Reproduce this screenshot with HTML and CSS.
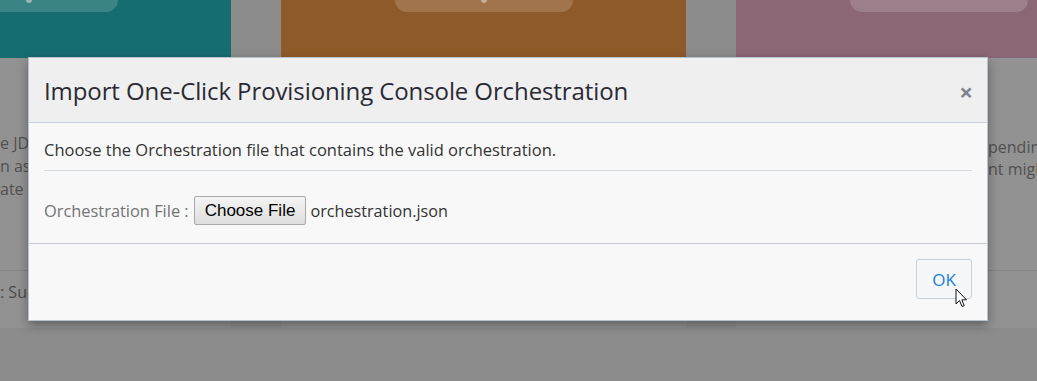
FILE: index.html
```html
<!DOCTYPE html>
<html lang="en">
<head>
<meta charset="utf-8">
<title>Import Orchestration</title>
<link rel="stylesheet" href="styles.css">
</head>
<body>
<div class="page">
  <div class="cards">
    <div class="card">
      <div class="card-head teal"><div class="pill"><span class="pill-icon"></span></div></div>
      <div class="card-body">
        <div class="card-text shift">
          <p>e JD</p>
          <p>n as</p>
          <p>ate</p>
        </div>
        <div class="card-foot shift"><span>: Suc</span></div>
      </div>
    </div>
    <div class="card">
      <div class="card-head orange"><div class="pill"><span class="pill-icon"></span></div></div>
      <div class="card-body">
        <div class="card-text"></div>
        <div class="card-foot"></div>
      </div>
    </div>
    <div class="card">
      <div class="card-head pink"><div class="pill"></div></div>
      <div class="card-body">
        <div class="card-text right">
          <p>pending</p>
          <p>nt migh</p>
        </div>
        <div class="card-foot"></div>
      </div>
    </div>
  </div>
</div>

<div class="dialog">
  <div class="dialog-header">
    <h1 class="dialog-title">Import One-Click Provisioning Console Orchestration</h1>
    <span class="close">&times;</span>
  </div>
  <div class="dialog-body">
    <p class="intro">Choose the Orchestration file that contains the valid orchestration.</p>
    <div class="file-row">
      <span class="file-label">Orchestration File :</span>
      <button class="file-btn" type="button">Choose File</button>
      <span class="file-name">orchestration.json</span>
    </div>
  </div>
  <div class="dialog-footer">
    <button class="ok-btn" type="button">OK</button>
  </div>
</div>

<svg class="cursor" width="13" height="21" viewBox="0 0 13 21" xmlns="http://www.w3.org/2000/svg">
  <path d="M1 1 L1 16 L4.5 12.5 L7 18.5 L9.2 17.6 L6.8 11.8 L11.5 11.8 Z" fill="#ffffff" stroke="#111111" stroke-width="1" stroke-linejoin="round"/>
</svg>
</body>
</html>
```

FILE: styles.css
```css
* { box-sizing: border-box; }

html, body {
  margin: 0;
  padding: 0;
  width: 1037px;
  height: 381px;
  overflow: hidden;
  background: #8c8c8c;
  font-family: "Open Sans", "Noto Sans", "DejaVu Sans", sans-serif;
}

.page {
  width: 1037px;
  height: 381px;
  overflow: hidden;
}

.cards {
  display: flex;
  gap: 50px;
  margin-left: -174px;
}

.card {
  flex: 0 0 405px;
  display: flex;
  flex-direction: column;
}

.card-head {
  height: 58px;
  display: flex;
  justify-content: center;
}

.teal { background: #166d6f; }
.orange { background: #8f5a2a; }
.pink { background: #8b6676; }

.pill {
  width: 178px;
  height: 12px;
  border-radius: 0 0 14px 14px;
  background: rgba(255, 255, 255, 0.16);
  display: flex;
  justify-content: center;
}

.pill-icon {
  width: 6px;
  height: 3px;
  background: rgba(215, 215, 215, 0.6);
  border-radius: 0 0 3px 3px;
}

.card-body {
  height: 270px;
  background: #929292;
  display: flex;
  flex-direction: column;
}

.card-text {
  height: 212px;
  padding-top: 74px;
  font-size: 16px;
  line-height: 23px;
  color: #505050;
  white-space: nowrap;
  overflow: hidden;
}

.card-text p { margin: 0; }

.card-text.shift { padding-left: 174px; }
.card-text.right { padding-left: 252px; padding-top: 78px; line-height: 22px; }

.card-foot {
  flex: 1;
  border-top: 1px solid #858585;
  padding-top: 10px;
  font-size: 16px;
  color: #4a4a4a;
  white-space: nowrap;
}

.card-foot.shift { padding-left: 174px; }

.dialog {
  position: absolute;
  left: 28px;
  top: 57px;
  width: 960px;
  height: 264px;
  background: #f8f8f8;
  border: 1px solid #b9c3cf;
  box-shadow: 0 4px 10px rgba(0, 0, 0, 0.35);
  display: flex;
  flex-direction: column;
}

.dialog-header {
  height: 65px;
  background: #efefef;
  border-bottom: 1px solid #c8d3df;
  display: flex;
  align-items: center;
  justify-content: space-between;
  padding: 0 14px 0 15px;
}

.dialog-title {
  margin: 0;
  font-size: 24px;
  font-weight: 400;
  color: #2a2a35;
  letter-spacing: -0.1px;
}

.close {
  font-size: 24px;
  font-weight: 700;
  color: #7d8690;
  line-height: 1;
  margin-top: 4px;
}

.dialog-body {
  padding: 0 15px;
  height: 121px;
  border-bottom: 1px solid #c9ccd2;
}

.intro {
  margin: 0;
  height: 48px;
  padding-top: 16px;
  font-size: 16.5px;
  line-height: 22px;
  color: #333333;
  border-bottom: 1px solid #d5dbe2;
}

.file-row {
  display: flex;
  align-items: center;
  gap: 4px;
  padding-top: 25px;
}

.file-label {
  font-size: 16.4px;
  color: #737373;
  margin-right: 1px;
}

.file-btn {
  font-family: "Liberation Sans", Arial, sans-serif;
  font-size: 17px;
  color: #000;
  height: 29px;
  padding: 0 10px;
  border: 1px solid #a9a9a9;
  border-radius: 2px;
  background: linear-gradient(#f4f4f4, #dedede);
}

.file-name {
  font-size: 16.2px;
  color: #333333;
}

.dialog-footer {
  flex: 1;
  display: flex;
  justify-content: flex-end;
  align-items: flex-start;
  padding: 15px 15px 0 0;
}

.ok-btn {
  width: 56px;
  height: 40px;
  border: 1px solid #c5d0db;
  border-radius: 3px;
  background: #f5f7f9;
  color: #1b80d8;
  font-family: "Open Sans", "Noto Sans", sans-serif;
  font-size: 17px;
  padding: 0;
}

.cursor {
  position: absolute;
  left: 955px;
  top: 288px;
}
```
